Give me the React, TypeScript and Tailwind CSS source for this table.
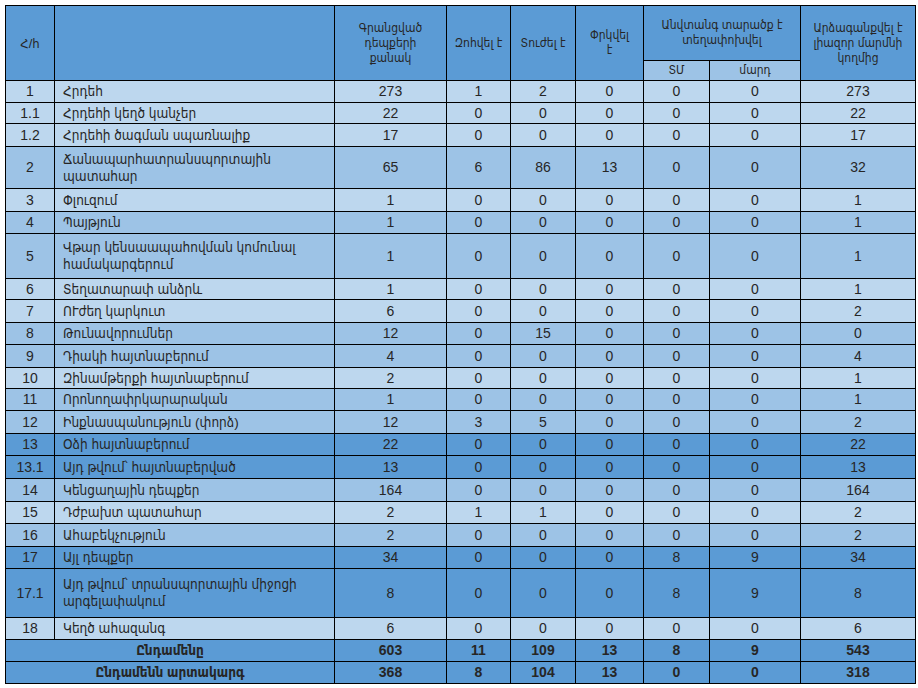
import React from "react"

type Row = {
  n: string
  name: React.ReactNode
  v: (number | string)[]
  bg: string
  h: string
}

const LIGHT = "bg-[#bdd7ee]"
const MID = "bg-[#9dc3e6]"
const DARK = "bg-[#5b9bd5]"

const rows: Row[] = [
  { n: "1", name: "Հրդեհ", v: [273, 1, 2, 0, 0, 0, 273], bg: LIGHT, h: "h-[22px]" },
  { n: "1.1", name: "Հրդեհի կեղծ կանչեր", v: [22, 0, 0, 0, 0, 0, 22], bg: LIGHT, h: "h-[21px]" },
  { n: "1.2", name: "Հրդեհի ծագման սպառնալիք", v: [17, 0, 0, 0, 0, 0, 17], bg: LIGHT, h: "h-[23px]" },
  {
    n: "2",
    name: (
      <>
        Ճանապարհատրանսպորտային
        <br />
        պատահար
      </>
    ),
    v: [65, 6, 86, 13, 0, 0, 32],
    bg: MID,
    h: "h-[42px]",
  },
  { n: "3", name: "Փլուզում", v: [1, 0, 0, 0, 0, 0, 1], bg: LIGHT, h: "h-[23px]" },
  { n: "4", name: "Պայթյուն", v: [1, 0, 0, 0, 0, 0, 1], bg: MID, h: "h-[22px]" },
  {
    n: "5",
    name: (
      <>
        Վթար կենսաապահովման կոմունալ
        <br />
        համակարգերում
      </>
    ),
    v: [1, 0, 0, 0, 0, 0, 1],
    bg: MID,
    h: "h-[45px]",
  },
  { n: "6", name: "Տեղատարափ անձրև", v: [1, 0, 0, 0, 0, 0, 1], bg: LIGHT, h: "h-[21px]" },
  { n: "7", name: "ՈՒժեղ կարկուտ", v: [6, 0, 0, 0, 0, 0, 2], bg: LIGHT, h: "h-[23px]" },
  { n: "8", name: "Թունավորումներ", v: [12, 0, 15, 0, 0, 0, 0], bg: MID, h: "h-[22px]" },
  { n: "9", name: "Դիակի հայտնաբերում", v: [4, 0, 0, 0, 0, 0, 4], bg: MID, h: "h-[23px]" },
  { n: "10", name: "Զինամթերքի հայտնաբերում", v: [2, 0, 0, 0, 0, 0, 1], bg: LIGHT, h: "h-[21px]" },
  { n: "11", name: "Որոնողափրկարարական", v: [1, 0, 0, 0, 0, 0, 1], bg: MID, h: "h-[22px]" },
  { n: "12", name: "Ինքնասպանություն (փորձ)", v: [12, 3, 5, 0, 0, 0, 2], bg: MID, h: "h-[23px]" },
  { n: "13", name: "Օձի հայտնաբերում", v: [22, 0, 0, 0, 0, 0, 22], bg: DARK, h: "h-[22px]" },
  { n: "13.1", name: "Այդ թվում՝ հայտնաբերված", v: [13, 0, 0, 0, 0, 0, 13], bg: DARK, h: "h-[23px]" },
  { n: "14", name: "Կենցաղային դեպքեր", v: [164, 0, 0, 0, 0, 0, 164], bg: MID, h: "h-[23px]" },
  { n: "15", name: "Դժբախտ պատահար", v: [2, 1, 1, 0, 0, 0, 2], bg: LIGHT, h: "h-[22px]" },
  { n: "16", name: "Ահաբեկչություն", v: [2, 0, 0, 0, 0, 0, 2], bg: MID, h: "h-[23px]" },
  { n: "17", name: "Այլ դեպքեր", v: [34, 0, 0, 0, 8, 9, 34], bg: DARK, h: "h-[22px]" },
  {
    n: "17.1",
    name: (
      <>
        Այդ թվում՝ տրանսպորտային միջոցի
        <br />
        արգելափակում
      </>
    ),
    v: [8, 0, 0, 0, 8, 9, 8],
    bg: DARK,
    h: "h-[49px]",
  },
  { n: "18", name: "Կեղծ ահազանգ", v: [6, 0, 0, 0, 0, 0, 6], bg: LIGHT, h: "h-[22px]" },
]

const totals = [
  { label: "Ընդամենը", v: [603, 11, 109, 13, 8, 9, 543] },
  { label: "Ընդամենն արտակարգ", v: [368, 8, 104, 13, 0, 0, 318] },
]

const cell = "border border-black p-0"
const th = "border border-black p-0 font-normal text-center align-middle text-[12px] leading-[15px]"

export default function App() {
  return (
    <div
      className="min-h-[688px] bg-white p-[5px] text-[#262626]"
      style={{ fontFamily: '"Liberation Sans", "DejaVu Sans Condensed", "DejaVu Sans", sans-serif' }}
    >
      <table className="w-[910px] table-fixed border-collapse text-[14px] leading-[17px]">
        <colgroup>
          <col className="w-[49px]" />
          <col className="w-[280px]" />
          <col className="w-[112px]" />
          <col className="w-[64px]" />
          <col className="w-[65px]" />
          <col className="w-[68px]" />
          <col className="w-[66px]" />
          <col className="w-[91px]" />
          <col className="w-[115px]" />
        </colgroup>
        <thead>
          <tr className="h-[55px] bg-[#5b9bd5]">
            <th rowSpan={2} className={`${th} text-[13px]`}>
              Հ/հ
            </th>
            <th rowSpan={2} className={th}></th>
            <th rowSpan={2} className={th}>
              Գրանցված
              <br />
              դեպքերի
              <br />
              քանակ
            </th>
            <th rowSpan={2} className={th}>
              Զոհվել է
            </th>
            <th rowSpan={2} className={th}>
              Տուժել է
            </th>
            <th rowSpan={2} className={th}>
              Փրկվել
              <br />է
            </th>
            <th colSpan={2} className={th}>
              Անվտանգ տարածք է
              <br />
              տեղափոխվել
            </th>
            <th rowSpan={2} className={th}>
              Արձագանքվել է
              <br />
              լիազոր մարմնի
              <br />
              կողմից
            </th>
          </tr>
          <tr className="h-[20px]">
            <th className={`${th} bg-[#9dc3e6]`}>ՏՄ</th>
            <th className={`${th} bg-[#9dc3e6]`}>մարդ</th>
          </tr>
        </thead>
        <tbody>
          {rows.map((r) => (
            <tr key={r.n} className={`${r.h} ${r.bg}`}>
              <td className={`${cell} text-center`}>{r.n}</td>
              <td className={`${cell} pl-[8px] text-left text-[13.5px]`}>{r.name}</td>
              {r.v.map((x, i) => (
                <td key={i} className={`${cell} text-center`}>
                  {x}
                </td>
              ))}
            </tr>
          ))}
          {totals.map((t) => (
            <tr key={t.label} className="h-[22px] bg-[#5b9bd5] font-bold">
              <td colSpan={2} className={`${cell} text-center text-[13.5px]`}>
                {t.label}
              </td>
              {t.v.map((x, i) => (
                <td key={i} className={`${cell} text-center`}>
                  {x}
                </td>
              ))}
            </tr>
          ))}
        </tbody>
      </table>
    </div>
  )
}
